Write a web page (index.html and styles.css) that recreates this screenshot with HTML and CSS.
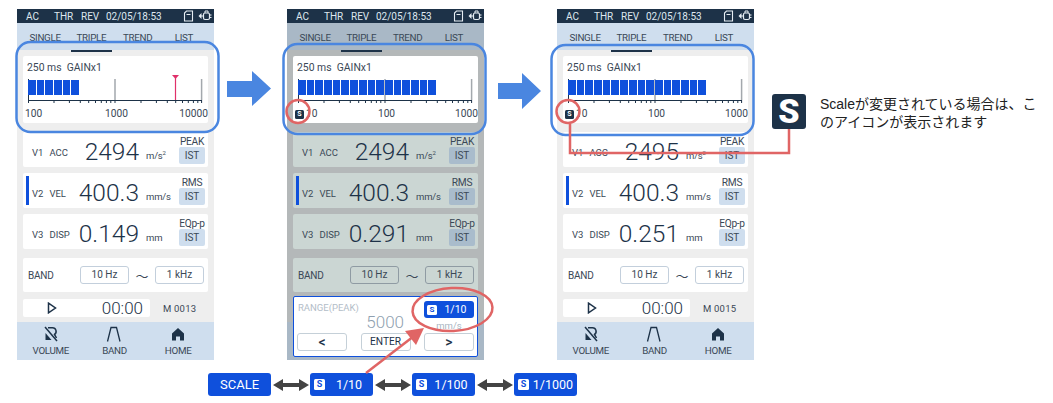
FILE: index.html
```html
<!DOCTYPE html>
<html lang="ja">
<head>
  <meta charset="UTF-8">
  <title>Scale</title>
  <link rel="stylesheet" href="styles.css">
</head>
<body>
  <!-- shared icons -->
  <svg class="defs" width="0" height="0">
    <symbol id="axis" viewBox="0 0 185 31">
      <path d="M87 5V26M173.6 5V26" stroke="#a3a8ad" stroke-width="1.5" fill="none"/>
      <path d="M0.5 5V29M0 26.5H174M26 26V29M41.4 26V29M52.3 26V29M60.7 26V29M67.5 26V29M73.3 26V29M78.4 26V29M82.8 26V29M87 26V29M113 26V29M128.4 26V29M139.3 26V29M147.7 26V29M154.5 26V29M160.3 26V29M165.4 26V29M169.8 26V29M173.6 26V29" stroke="#1d3248" stroke-width="1" fill="none"/>
    </symbol>
    <symbol id="ico-sd" viewBox="0 0 10 12">
      <path d="M3 1H9V11H1V3ZM3 4.5H7" fill="none" stroke="#e6edf4" stroke-width="1.1"/>
    </symbol>
    <symbol id="ico-plug" viewBox="0 0 14 12">
      <path d="M0.5 6L3.5 3V9Z" fill="#e6edf4"/>
      <path d="M3 6H5" stroke="#e6edf4"/>
      <rect x="5.5" y="3" width="6" height="6.5" rx="1.5" fill="none" stroke="#e6edf4" stroke-width="1.2"/>
      <path d="M7 3V1H10V3M11.5 5H13.5M11.5 7.5H13.5" fill="none" stroke="#e6edf4"/>
    </symbol>
    <symbol id="ico-vol" viewBox="0 0 16 16">
      <path d="M2 1L14 15" stroke="#1d3248" stroke-width="1.5"/>
      <path d="M5 1.8H9.5A3.6 3.6 0 0 1 11.5 8.4L13.5 12" fill="none" stroke="#1d3248" stroke-width="1.5"/>
      <path d="M2.5 7L8.5 14H2.5Z" fill="#1d3248"/>
    </symbol>
    <symbol id="ico-band" viewBox="0 0 16 16">
      <path d="M1.5 15.5L5 1.5H10.5L14 15.5" fill="none" stroke="#1d3248" stroke-width="1.3"/>
    </symbol>
    <symbol id="ico-home" viewBox="0 0 16 16">
      <path fill-rule="evenodd" d="M8 2L14 7.5V14.5H10V10.5H6V14.5H2V7.5Z" fill="#1d3248"/>
    </symbol>
    <symbol id="ico-play" viewBox="0 0 10 12">
      <path d="M1.5 1.2L8.5 6L1.5 10.8Z" fill="none" stroke="#1d3248" stroke-width="1.5"/>
    </symbol>
  </svg>

  <div class="row-screens">
    <!-- screen 1 -->
    <section class="screen">
      <div class="status">
        <span class="st-ac">AC</span><span class="st-thr">THR</span><span class="st-rev">REV</span><span class="st-date">02/05/18:53</span>
        <svg class="st-sd"><use href="#ico-sd"/></svg>
        <svg class="st-plug"><use href="#ico-plug"/></svg>
      </div>
      <div class="tabs">
        <span>SINGLE</span><span class="tab-active">TRIPLE</span><span>TREND</span><span>LIST</span>
      </div>
      <div class="content">
        <div class="card scale-card">
          <div class="scale-title">250 ms&nbsp; GAINx1</div>
          <div class="track">
            <svg class="axis"><use href="#axis"/></svg>
            <div class="bars">
              <i></i><i></i><i></i><i></i><i></i><i></i>
            </div>
            <svg class="axis" viewBox="0 0 185 31"><path d="M147.5 4V26" stroke="#e0306a" stroke-width="1.2"/><path d="M144 1H151L147.5 5Z" fill="#e0306a"/></svg>
          </div>
          <div class="scale-labels"><span class="lab-first">100</span><span>1000</span><span class="lab-last">10000</span></div>
        </div>
        <div class="card metric metric-first">
          <div class="metric-main"><span class="metric-label"><b>V1</b><b>ACC</b></span><span class="metric-value">2494</span></div>
          <span class="metric-unit">m/s<sup>2</sup></span>
          <div class="metric-side"><span>PEAK</span><em>IST</em></div>
        </div>
        <div class="card metric metric-selected">
          <div class="metric-main"><span class="metric-label"><b>V2</b><b>VEL</b></span><span class="metric-value">400.3</span></div>
          <span class="metric-unit">mm/s</span>
          <div class="metric-side"><span>RMS</span><em>IST</em></div>
        </div>
        <div class="card metric">
          <div class="metric-main"><span class="metric-label"><b>V3</b><b>DISP</b></span><span class="metric-value">0.149</span></div>
          <span class="metric-unit">mm</span>
          <div class="metric-side"><span>EQp-p</span><em>IST</em></div>
        </div>
        <div class="card band-card">
          <span class="band-label">BAND</span><span class="band-box">10 Hz</span><span class="band-tilde">〜</span><span class="band-box">1 kHz</span>
        </div>
        <div class="play-row">
          <div class="card play-card"><svg class="play-ico"><use href="#ico-play"/></svg><span class="play-time">00:00</span></div>
          <span class="play-mem">M 0013</span>
        </div>
      </div>
      <div class="footer">
        <div><svg><use href="#ico-vol"/></svg><span>VOLUME</span></div>
        <div><svg><use href="#ico-band"/></svg><span>BAND</span></div>
        <div><svg><use href="#ico-home"/></svg><span>HOME</span></div>
      </div>
    </section>

    <!-- screen 2, dimmed with range panel open -->
    <section class="screen screen-dim">
      <div class="status">
        <span class="st-ac">AC</span><span class="st-thr">THR</span><span class="st-rev">REV</span><span class="st-date">02/05/18:53</span>
        <svg class="st-sd"><use href="#ico-sd"/></svg>
        <svg class="st-plug"><use href="#ico-plug"/></svg>
      </div>
      <div class="tabs">
        <span>SINGLE</span><span class="tab-active">TRIPLE</span><span>TREND</span><span>LIST</span>
      </div>
      <div class="content">
        <div class="card scale-card">
          <div class="scale-title">250 ms&nbsp; GAINx1</div>
          <div class="track">
            <svg class="axis"><use href="#axis"/></svg>
            <div class="bars">
              <i></i><i></i><i></i><i></i><i></i><i></i><i></i><i></i><i></i><i></i><i></i><i></i><i></i><i></i><i></i><i></i>
            </div>
          </div>
          <div class="scale-labels"><span class="lab-first"><span class="s-badge">S</span>10</span><span>100</span><span class="lab-last">1000</span></div>
        </div>
        <div class="card metric metric-first">
          <div class="metric-main"><span class="metric-label"><b>V1</b><b>ACC</b></span><span class="metric-value">2494</span></div>
          <span class="metric-unit">m/s<sup>2</sup></span>
          <div class="metric-side"><span>PEAK</span><em>IST</em></div>
        </div>
        <div class="card metric metric-selected">
          <div class="metric-main"><span class="metric-label"><b>V2</b><b>VEL</b></span><span class="metric-value">400.3</span></div>
          <span class="metric-unit">mm/s</span>
          <div class="metric-side"><span>RMS</span><em>IST</em></div>
        </div>
        <div class="card metric">
          <div class="metric-main"><span class="metric-label"><b>V3</b><b>DISP</b></span><span class="metric-value">0.291</span></div>
          <span class="metric-unit">mm</span>
          <div class="metric-side"><span>EQp-p</span><em>IST</em></div>
        </div>
        <div class="card band-card">
          <span class="band-label">BAND</span><span class="band-box">10 Hz</span><span class="band-tilde">〜</span><span class="band-box">1 kHz</span>
        </div>
      </div>
      <div class="footer"></div>
      <div class="range-panel">
        <div class="range-top">
          <div class="range-left">
            <div class="range-title">RANGE(PEAK)</div>
            <div class="range-value">5000</div>
          </div>
          <div class="range-right">
            <div class="scale-btn scale-btn-small"><span class="s-badge s-badge-light">S</span><span class="scale-btn-text">1/10</span></div>
            <div class="range-unit">mm/s</div>
          </div>
        </div>
        <div class="range-btns">
          <span class="range-btn range-arrow">&lt;</span><span class="range-btn">ENTER</span><span class="range-btn range-arrow">&gt;</span>
        </div>
      </div>
    </section>

    <!-- screen 3 -->
    <section class="screen">
      <div class="status">
        <span class="st-ac">AC</span><span class="st-thr">THR</span><span class="st-rev">REV</span><span class="st-date">02/05/18:53</span>
        <svg class="st-sd"><use href="#ico-sd"/></svg>
        <svg class="st-plug"><use href="#ico-plug"/></svg>
      </div>
      <div class="tabs">
        <span>SINGLE</span><span class="tab-active">TRIPLE</span><span>TREND</span><span>LIST</span>
      </div>
      <div class="content">
        <div class="card scale-card">
          <div class="scale-title">250 ms&nbsp; GAINx1</div>
          <div class="track">
            <svg class="axis"><use href="#axis"/></svg>
            <div class="bars">
              <i></i><i></i><i></i><i></i><i></i><i></i><i></i><i></i><i></i><i></i><i></i><i></i><i></i><i></i><i></i><i></i>
            </div>
          </div>
          <div class="scale-labels"><span class="lab-first"><span class="s-badge">S</span>10</span><span>100</span><span class="lab-last">1000</span></div>
        </div>
        <div class="card metric metric-first">
          <div class="metric-main"><span class="metric-label"><b>V1</b><b>ACC</b></span><span class="metric-value">2495</span></div>
          <span class="metric-unit">m/s<sup>2</sup></span>
          <div class="metric-side"><span>PEAK</span><em>IST</em></div>
        </div>
        <div class="card metric metric-selected">
          <div class="metric-main"><span class="metric-label"><b>V2</b><b>VEL</b></span><span class="metric-value">400.3</span></div>
          <span class="metric-unit">mm/s</span>
          <div class="metric-side"><span>RMS</span><em>IST</em></div>
        </div>
        <div class="card metric">
          <div class="metric-main"><span class="metric-label"><b>V3</b><b>DISP</b></span><span class="metric-value">0.251</span></div>
          <span class="metric-unit">mm</span>
          <div class="metric-side"><span>EQp-p</span><em>IST</em></div>
        </div>
        <div class="card band-card">
          <span class="band-label">BAND</span><span class="band-box">10 Hz</span><span class="band-tilde">〜</span><span class="band-box">1 kHz</span>
        </div>
        <div class="play-row">
          <div class="card play-card"><svg class="play-ico"><use href="#ico-play"/></svg><span class="play-time">00:00</span></div>
          <span class="play-mem">M 0015</span>
        </div>
      </div>
      <div class="footer">
        <div><svg><use href="#ico-vol"/></svg><span>VOLUME</span></div>
        <div><svg><use href="#ico-band"/></svg><span>BAND</span></div>
        <div><svg><use href="#ico-home"/></svg><span>HOME</span></div>
      </div>
    </section>

    <!-- note -->
    <div class="note">
      <div class="note-icon">S</div>
      <p class="note-text">Scaleが変更されている場合は、このアイコンが表示されます</p>
    </div>
  </div>

  <!-- scale steps -->
  <div class="row-steps">
    <div class="scale-btn scale-btn-plain"><span class="scale-btn-text">SCALE</span></div>
    <svg class="dbl-arrow" viewBox="0 0 36 14"><path d="M0 7L10 1V5H26V1L36 7L26 13V9H10V13Z" fill="#444"/></svg>
    <div class="scale-btn"><span class="s-badge s-badge-light">S</span><span class="scale-btn-text">1/10</span></div>
    <svg class="dbl-arrow" viewBox="0 0 36 14"><path d="M0 7L10 1V5H26V1L36 7L26 13V9H10V13Z" fill="#444"/></svg>
    <div class="scale-btn"><span class="s-badge s-badge-light">S</span><span class="scale-btn-text">1/100</span></div>
    <svg class="dbl-arrow" viewBox="0 0 36 14"><path d="M0 7L10 1V5H26V1L36 7L26 13V9H10V13Z" fill="#444"/></svg>
    <div class="scale-btn"><span class="s-badge s-badge-light">S</span><span class="scale-btn-text">1/1000</span></div>
  </div>

  <!-- callouts drawn over the screens -->
  <svg class="callouts" width="1053" height="403" viewBox="0 0 1053 403">
    <g fill="none" stroke="#4a86e0" stroke-width="2.5">
      <rect x="16.5" y="42" width="202" height="90" rx="14"/>
      <rect x="283.5" y="44" width="202" height="90" rx="14"/>
      <rect x="551.5" y="45" width="202" height="90" rx="14"/>
    </g>
    <g fill="#4a86e0">
      <path d="M227 81H252V71L271 88.5L252 106V97H227Z"/>
      <path d="M498 83H522V73L541 91L522 109V99H498Z"/>
    </g>
    <g fill="none" stroke="#e06565" stroke-width="2.5">
      <circle cx="298" cy="111.5" r="11.5"/>
      <circle cx="568" cy="111.5" r="11.5"/>
      <ellipse cx="452.5" cy="309.5" rx="40" ry="21.5" transform="rotate(-3 452.5 309.5)"/>
      <path d="M570 124V153H789V129"/>
      <path d="M366 373L414 336"/>
    </g>
    <path d="M424 328L416 345L405 331Z" fill="#e06565"/>
  </svg>
</body>
</html>
```

FILE: styles.css
```css
* {
  margin: 0;
  padding: 0;
  box-sizing: border-box;
}

body {
  position: relative;
  width: 1053px;
  height: 403px;
  overflow: hidden;
  background: #fff;
  font-family: "Roboto", "Noto Sans CJK JP", sans-serif;
  color: #3a4856;
}

.defs {
  position: absolute;
}

.row-screens {
  display: flex;
  gap: 73px;
  padding: 9px 0 0 17px;
}

/* screen */
.screen {
  --tab-bg: #cfdeee;
  --body-bg: #eeeeee;
  --card-bg: #ffffff;
  --chip-bg: #cfdeee;
  --box-border: #c3cfdc;
  position: relative;
  flex: none;
  display: flex;
  flex-direction: column;
  width: 197px;
  height: 351px;
}

.screen-dim {
  --tab-bg: #a9b8c6;
  --body-bg: #b4b8b9;
  --card-bg: #cbd6d3;
  --chip-bg: #a9bccc;
  --box-border: #8f9ba3;
}

.status {
  position: relative;
  display: flex;
  align-items: center;
  height: 14px;
  padding-left: 9px;
  background: #1d3248;
  color: #dfe7ef;
  font-size: 10px;
}

.st-ac { width: 28px; }
.st-thr { width: 27px; }
.st-rev { width: 25px; }

.st-sd {
  position: absolute;
  left: 166px;
  top: 1px;
  width: 11px;
  height: 12px;
}

.st-plug {
  position: absolute;
  left: 181px;
  top: 1px;
  width: 14px;
  height: 12px;
}

.tabs {
  display: grid;
  grid-template-columns: repeat(4, 1fr);
  padding: 0 7px 0 5px;
  height: 27px;
  background: var(--tab-bg);
  font-size: 9.8px;
  letter-spacing: -0.3px;
  text-align: center;
  line-height: 29px;
}

.tab-active {
  position: relative;
}

.tab-active::after {
  content: "";
  position: absolute;
  left: 3px;
  right: 3px;
  bottom: 0;
  height: 2px;
  background: #1d3248;
}

.content {
  flex: none;
  height: 272px;
  padding: 6px 6px 0;
  background: var(--body-bg);
}

.card {
  background: var(--card-bg);
  border-radius: 2px;
}

/* scale */
.scale-card {
  height: 67px;
  margin-bottom: 9px;
  padding: 6px 0 0 4px;
  background: #fff;
}

.scale-title {
  height: 12px;
  font-size: 10.4px;
  line-height: 12px;
}

.track {
  display: grid;
  grid-template-columns: 180px;
  height: 31px;
  padding-left: 1px;
}

.axis {
  grid-area: 1 / 1;
  width: 185px;
  height: 31px;
  overflow: visible;
}

.axis use {
  width: 185px;
  height: 31px;
}

.bars {
  grid-area: 1 / 1;
  display: flex;
  gap: 1px;
  height: 15px;
  margin-top: 6px;
}

.bars i {
  width: 7.7px;
  background: #0f50dc;
}

.scale-labels {
  display: grid;
  grid-template-columns: 1fr auto 1fr;
  margin: 3px 0 0 -2px;
  font-size: 10.2px;
  line-height: 12px;
}

.lab-first {
  display: flex;
  align-items: center;
}

.lab-last {
  justify-self: end;
}

.s-badge {
  flex: none;
  display: inline-block;
  width: 9px;
  height: 9px;
  margin-right: 2px;
  border-radius: 1.5px;
  background: #1d3248;
  color: #fff;
  font-size: 7px;
  font-weight: 700;
  line-height: 9px;
  text-align: center;
}

.s-badge-light {
  width: 11px;
  height: 11px;
  margin: 0;
  background: #fff;
  color: #0f50dc;
  font-size: 9px;
  line-height: 11px;
}

/* metric rows */
.metric {
  position: relative;
  display: flex;
  align-items: center;
  height: 35px;
  margin-bottom: 6px;
  padding-top: 5px;
}

.metric-selected::before {
  content: "";
  position: absolute;
  left: 3px;
  top: 3px;
  width: 2.5px;
  height: 29px;
  background: #0f50dc;
}

.metric-main {
  display: flex;
  align-items: center;
  width: 116px;
  padding-left: 9px;
}

.metric-label {
  display: flex;
  gap: 6px;
  font-size: 9.5px;
}

.metric-label b {
  font-weight: 400;
}

.metric-value {
  margin-left: auto;
  font-size: 24.5px;
  font-weight: 300;
  line-height: 28px;
  color: #1d3248;
}

.metric-unit {
  margin: 7px 0 0 7px;
  font-size: 9.5px;
  letter-spacing: -0.2px;
}

.metric-unit sup {
  font-size: 6px;
  line-height: 0;
}

.metric-side {
  position: absolute;
  right: 3px;
  bottom: 3px;
  display: flex;
  flex-direction: column;
  align-items: center;
  width: 26px;
  font-size: 10.2px;
  letter-spacing: -0.3px;
  white-space: nowrap;
}

.metric-side span {
  line-height: 11px;
}

.metric-side em {
  width: 26px;
  height: 17px;
  border-radius: 2px;
  background: var(--chip-bg);
  font-style: normal;
  font-size: 10px;
  line-height: 17px;
  text-align: center;
  letter-spacing: 0;
}

.metric:nth-of-type(4) {
  margin-bottom: 9px;
}

/* band */
.band-card {
  display: flex;
  align-items: center;
  height: 34px;
  margin-bottom: 7px;
  padding-left: 5px;
  font-size: 10px;
}

.band-label {
  width: 52px;
  letter-spacing: -0.2px;
}

.band-box {
  width: 49px;
  height: 18px;
  border: 1px solid var(--box-border);
  border-radius: 3px;
  text-align: center;
  line-height: 16px;
}

.band-tilde {
  width: 26px;
  text-align: center;
  font-size: 13px;
}

/* playback */
.play-row {
  display: flex;
  align-items: center;
  height: 18px;
}

.play-card {
  position: relative;
  display: flex;
  align-items: center;
  width: 127px;
  height: 18px;
}

.play-ico {
  width: 10px;
  height: 12px;
  margin-left: 24px;
}

.play-time {
  margin-left: auto;
  margin-right: 7px;
  font-size: 17px;
  font-weight: 300;
  color: #1d3248;
}

.play-mem {
  margin-left: 13px;
  font-size: 9.5px;
  letter-spacing: 0.2px;
}

/* footer */
.footer {
  flex: 1;
  display: grid;
  grid-template-columns: repeat(3, 1fr);
  padding: 4px 4px 0 2px;
  background: var(--tab-bg);
  font-size: 9.8px;
  letter-spacing: -0.3px;
  line-height: 11px;
  text-align: center;
}

.footer svg {
  display: block;
  width: 16px;
  height: 16px;
  margin: 0 auto 3px;
}

/* range panel opens over the dimmed screen */
.range-panel {
  position: absolute;
  left: 6px;
  bottom: 3px;
  width: 185px;
  height: 61px;
  padding: 4px 3px 0;
  border: 1.5px solid #0f50dc;
  border-radius: 2px;
  background: #fff;
}

.range-top {
  display: flex;
  justify-content: space-between;
  height: 32px;
}

.range-left {
  width: 107px;
  padding-left: 1px;
}

.range-title {
  font-size: 9.5px;
  color: #b3bdc8;
  line-height: 13px;
}

.range-value {
  font-size: 17px;
  font-weight: 300;
  line-height: 17px;
  color: #8f9fb0;
  text-align: right;
}

.range-right {
  width: 50px;
}

.range-unit {
  font-size: 9.5px;
  line-height: 12px;
  color: #a9b5c2;
  text-align: center;
  margin-top: 2px;
}

.range-btns {
  display: flex;
  justify-content: space-between;
}

.range-btn {
  width: 50px;
  height: 18px;
  border: 1px solid #c5d0d8;
  border-radius: 3px;
  color: #1d3248;
  font-size: 10.2px;
  text-align: center;
  line-height: 16px;
}

.range-arrow {
  font-size: 14px;
  font-weight: 500;
}

/* scale steps */
.row-steps {
  display: flex;
  align-items: center;
  gap: 1.5px;
  margin: 13px 0 0 208px;
}

.scale-btn {
  flex: none;
  display: flex;
  align-items: center;
  width: 63px;
  height: 23px;
  padding-left: 4px;
  border-radius: 3px;
  background: #0f50dc;
  color: #fff;
  font-size: 12.5px;
}

.scale-btn-text {
  flex: 1;
  text-align: center;
}

.scale-btn-plain {
  padding-left: 0;
  font-size: 13px;
}

.scale-btn-small {
  width: 50px;
  height: 17px;
  padding-left: 3px;
  font-size: 10.5px;
}

.scale-btn-small .s-badge {
  width: 10px;
  height: 10px;
  font-size: 8px;
  line-height: 10px;
}

.dbl-arrow {
  flex: none;
  width: 36px;
  height: 14px;
}

/* note */
.note {
  flex: none;
  display: flex;
  gap: 14px;
  width: 270px;
  margin: 85px 0 0 -55px;
}

.note-icon {
  flex: none;
  width: 34px;
  height: 35px;
  border-radius: 3px;
  background: #1d3248;
  color: #fff;
  font-size: 34px;
  font-weight: 900;
  line-height: 35px;
  text-align: center;
}

.note-text {
  width: 219px;
  margin-top: 1px;
  font-family: "Liberation Sans", "Noto Sans CJK JP", sans-serif;
  font-size: 14px;
  line-height: 18px;
  color: #222;
}

.callouts {
  position: absolute;
  left: 0;
  top: 0;
  pointer-events: none;
}
```
